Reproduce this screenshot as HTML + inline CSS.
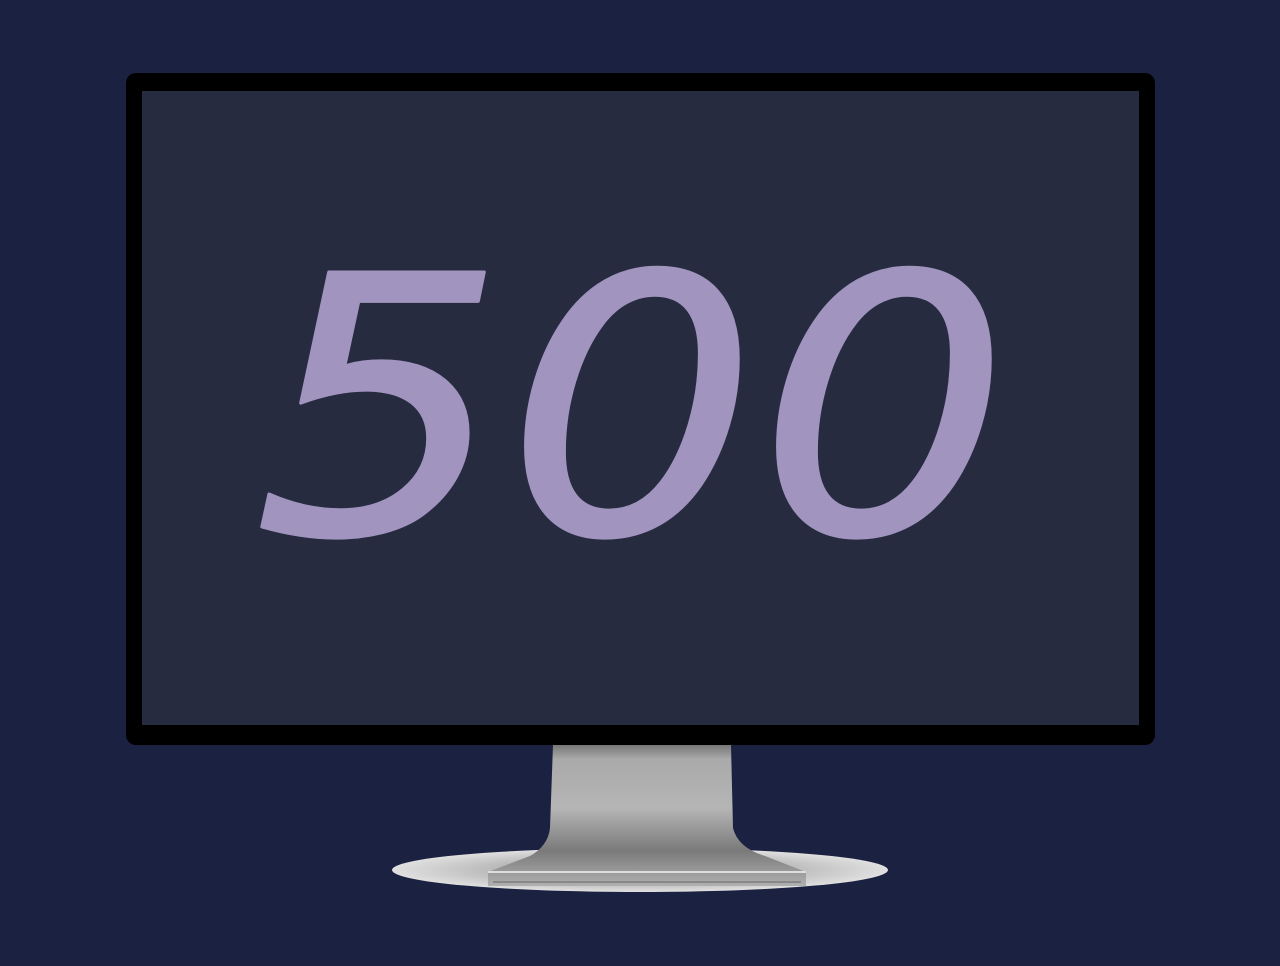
<!DOCTYPE html>
<html><head><style>
html,body{margin:0;padding:0;width:1280px;height:966px;background:#1b2140;overflow:hidden}
</style></head><body>
<svg width="1280" height="966" viewBox="0 0 1280 966" xmlns="http://www.w3.org/2000/svg" style="position:absolute;left:0;top:0">
<defs>
<radialGradient id="sh" cx="50%" cy="50%" r="50%">
<stop offset="0" stop-color="#777"/><stop offset="0.6" stop-color="#bbb"/><stop offset="1" stop-color="#e0e0e0"/>
</radialGradient>
<linearGradient id="nk" x1="0" y1="0" x2="0" y2="1">
<stop offset="0" stop-color="#777"/><stop offset="0.1" stop-color="#aaa"/><stop offset="0.45" stop-color="#b5b5b5"/><stop offset="0.75" stop-color="#7a7a7a"/><stop offset="1" stop-color="#b0b0b0"/>
</linearGradient>
</defs>
<ellipse cx="640" cy="870" rx="248" ry="22" fill="url(#sh)"/>
<path d="M553 745 L731 745 L733 828 Q738 848 765 856 L806 872 L806 886 L488 886 L488 872 L530 856 Q548 846 550 828 Z" fill="url(#nk)"/>
<rect x="488" y="871" width="318" height="2" fill="#ddd"/>
<rect x="493" y="881" width="308" height="2" fill="#888"/>
<rect x="126" y="73" width="1029" height="672" rx="10" fill="#000"/>
<rect x="142" y="91" width="997" height="634" fill="#272b40"/>
<text x="254" y="533" font-family="DejaVu Sans, sans-serif" font-style="oblique" font-size="358" fill="#a195c0" stroke="#a195c0" stroke-width="3" stroke-linejoin="round" textLength="756" lengthAdjust="spacingAndGlyphs">500</text>
</svg>
</body></html>
